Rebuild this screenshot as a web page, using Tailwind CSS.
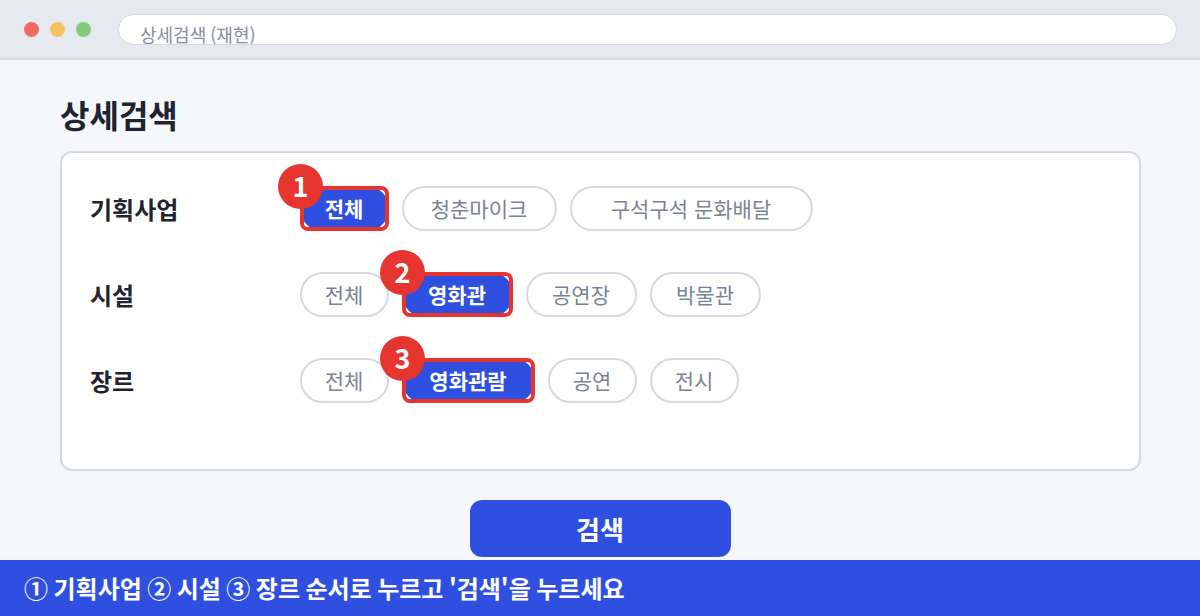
<!DOCTYPE html>
<html lang="ko">

<head>
    <meta charset="UTF-8" />
    <title>상세검색</title>
    <script src="https://cdn.jsdelivr.net/npm/@tailwindcss/browser@4"></script>
</head>

<body class="w-[1200px] h-[616px] overflow-hidden bg-[#f5f7fb] font-['Noto_Sans_CJK_KR','Noto_Sans',sans-serif] flex flex-col">
    <!-- window bar -->
    <div class="h-[60px] shrink-0 bg-[#e6e9ef] border-b-2 border-[#d5d9e2] flex items-center pl-6 pr-[23px] pt-[1px]">
        <div class="flex gap-[11px]">
            <span class="w-[15px] h-[15px] rounded-full bg-[#f26b60]"></span>
            <span class="w-[15px] h-[15px] rounded-full bg-[#f3c25f]"></span>
            <span class="w-[15px] h-[15px] rounded-full bg-[#7fcb78]"></span>
        </div>
        <div class="ml-[27px] flex-1 h-[31px] rounded-full bg-white border border-[#d5d9e2] overflow-hidden pl-[21px] pt-[4px] text-[18px] leading-[30px] [word-spacing:-1px] text-[#868e9c]">상세검색 (재현)</div>
    </div>

    <div class="flex-1 pl-[60px] pr-[59px]">
        <h1 class="mt-[31px] h-[50px] text-[32px] leading-[46px] font-bold text-[#1f2430]">상세검색</h1>
        <!-- filter card -->
        <div class="mt-[10px] h-[320px] bg-white border-2 border-[#d5d9e2] rounded-[12px] pl-[28px] pt-[33px] flex flex-col gap-[41px]">
            <div class="flex items-center h-[45px]">
                <div class="w-[210px] text-[24px] font-bold text-[#1f2430]">기획사업</div>
                <div class="flex gap-[13px]">
                    <div class="relative w-[89px] h-[45px] rounded-full bg-[#2f4fe0] flex items-center justify-center pr-[1px] text-[21px] font-bold text-white">전체
                        <span class="absolute inset-0 border-4 border-[#e5352e] rounded-[8px]"></span>
                        <span class="absolute left-[-22px] top-[-22px] w-[45px] h-[45px] rounded-full bg-[#e5352e] flex items-center justify-center text-[27px] font-bold text-white">1</span>
                    </div>
                    <div class="w-[155px] h-[45px] rounded-full bg-white border-2 border-[#d5d9e2] flex items-center justify-center pr-[1px] text-[21px] text-[#7b8391]">청춘마이크</div>
                    <div class="w-[243px] h-[45px] rounded-full bg-white border-2 border-[#d5d9e2] flex items-center justify-center pr-[1px] text-[21px] text-[#7b8391]">구석구석 문화배달</div>
                </div>
            </div>
            <div class="flex items-center h-[45px]">
                <div class="w-[210px] text-[24px] font-bold text-[#1f2430]">시설</div>
                <div class="flex gap-[13px]">
                    <div class="w-[89px] h-[45px] rounded-full bg-white border-2 border-[#d5d9e2] flex items-center justify-center pr-[1px] text-[21px] text-[#7b8391]">전체</div>
                    <div class="relative w-[111px] h-[45px] rounded-full bg-[#2f4fe0] flex items-center justify-center pr-[1px] text-[21px] font-bold text-white">영화관
                        <span class="absolute inset-0 border-4 border-[#e5352e] rounded-[8px]"></span>
                        <span class="absolute left-[-22px] top-[-22px] w-[45px] h-[45px] rounded-full bg-[#e5352e] flex items-center justify-center text-[27px] font-bold text-white">2</span>
                    </div>
                    <div class="w-[111px] h-[45px] rounded-full bg-white border-2 border-[#d5d9e2] flex items-center justify-center pr-[1px] text-[21px] text-[#7b8391]">공연장</div>
                    <div class="w-[111px] h-[45px] rounded-full bg-white border-2 border-[#d5d9e2] flex items-center justify-center pr-[1px] text-[21px] text-[#7b8391]">박물관</div>
                </div>
            </div>
            <div class="flex items-center h-[45px]">
                <div class="w-[210px] text-[24px] font-bold text-[#1f2430]">장르</div>
                <div class="flex gap-[13px]">
                    <div class="w-[89px] h-[45px] rounded-full bg-white border-2 border-[#d5d9e2] flex items-center justify-center pr-[1px] text-[21px] text-[#7b8391]">전체</div>
                    <div class="relative w-[133px] h-[45px] rounded-full bg-[#2f4fe0] flex items-center justify-center pr-[1px] text-[21px] font-bold text-white">영화관람
                        <span class="absolute inset-0 border-4 border-[#e5352e] rounded-[8px]"></span>
                        <span class="absolute left-[-22px] top-[-22px] w-[45px] h-[45px] rounded-full bg-[#e5352e] flex items-center justify-center text-[27px] font-bold text-white">3</span>
                    </div>
                    <div class="w-[89px] h-[45px] rounded-full bg-white border-2 border-[#d5d9e2] flex items-center justify-center pr-[1px] text-[21px] text-[#7b8391]">공연</div>
                    <div class="w-[89px] h-[45px] rounded-full bg-white border-2 border-[#d5d9e2] flex items-center justify-center pr-[1px] text-[21px] text-[#7b8391]">전시</div>
                </div>
            </div>
        </div>
        <div class="mt-[29px] flex justify-center">
            <button class="w-[261px] h-[57px] rounded-[12px] bg-[#2f4fe0] pr-[1px] text-[26px] font-bold text-white">검색</button>
        </div>
    </div>

    <!-- hint bar -->
    <div class="h-[56px] shrink-0 bg-[#2f4fe0] pl-6 flex items-center text-[24px] font-bold [word-spacing:-1.25px] text-white">① 기획사업 ② 시설 ③ 장르 순서로 누르고 '검색'을 누르세요</div>
</body>

</html>
